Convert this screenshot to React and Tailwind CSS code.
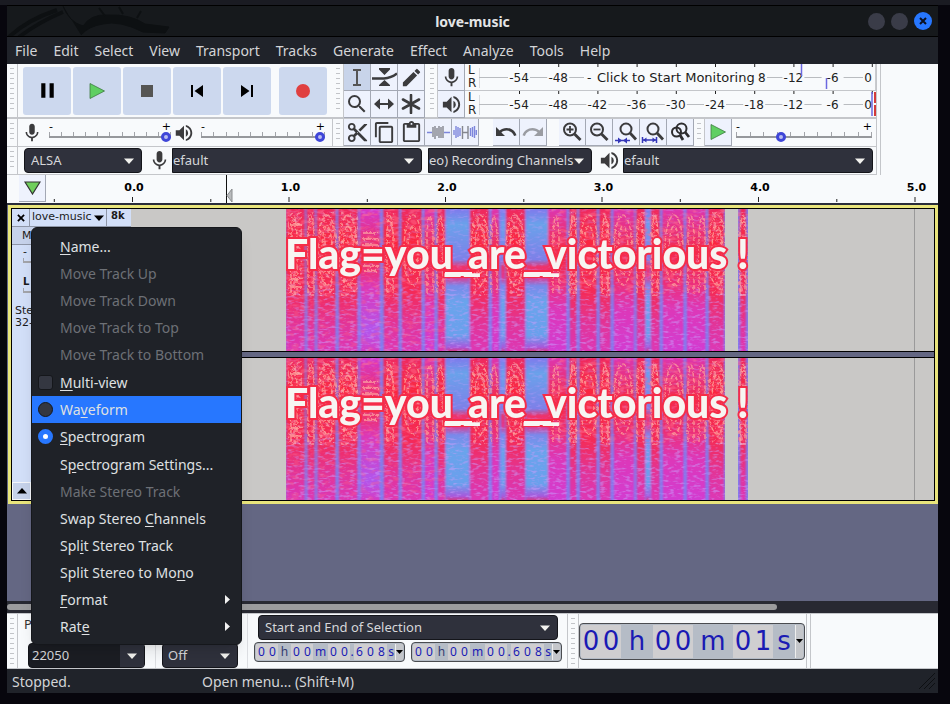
import React from "react";
import {
  MdMic, MdVolumeUp, MdContentCut, MdContentCopy, MdContentPaste, MdEdit, MdSearch,
  MdUndo, MdRedo, MdPause, MdSkipPrevious, MdSkipNext,
} from "react-icons/md";

const MENUS = ["File", "Edit", "Select", "View", "Transport", "Tracks", "Generate", "Effect", "Analyze", "Tools", "Help"];

function Grip() {
  return (
    <div className="flex w-[11px] shrink-0 justify-center border-r border-[#c4c6ca] py-1">
      <div className="w-1 bg-[repeating-linear-gradient(#c2c4c8_0_1px,transparent_1px_5px)]" />
    </div>
  );
}

function ToolButton({ label, active, children }) {
  return (
    <button
      aria-label={label}
      className={`flex h-[27px] w-[27px] shrink-0 items-center justify-center border-r border-b border-[#a3a8b4] text-[#3b3b3d] ${active ? "bg-[#c8d4ea]" : "bg-[#eef2fd]"}`}
    >
      {children}
    </button>
  );
}

function BigButton({ label, children }) {
  return (
    <button aria-label={label} className="flex h-12 w-12 items-center justify-center rounded-[3px] bg-[#ccd8ee] text-black">
      {children}
    </button>
  );
}

function Arrow({ className = "text-[#f2f2ee]" }) {
  return (
    <svg width="10" height="6" viewBox="0 0 10 6" className={className}>
      <path d="M0 0.5H10L5 6Z" fill="currentColor" />
    </svg>
  );
}

function Select({ label, value, className, pad = "pl-[7px]" }) {
  return (
    <div className={`grid h-[25px] shrink-0 items-center border border-[#14151a] bg-[#2f313c] text-[#d6d7da] ${className}`}>
      <select
        aria-label={label}
        className={`col-start-1 row-start-1 h-full w-full appearance-none bg-transparent text-[13px] outline-none ${pad}`}
      >
        <option>{value}</option>
      </select>
      <span className="pointer-events-none col-start-1 row-start-1 mr-[7px] justify-self-end">
        <Arrow />
      </span>
    </div>
  );
}

function Slider({ label, value, className }) {
  return (
    <div className={`shrink-0 font-['DejaVu_Sans',sans-serif] ${className}`}>
      <div className="flex h-2 justify-between text-[11px] leading-[8px] text-black">
        <span>-</span>
        <span>+</span>
      </div>
      <div className="grid">
        <div className="col-start-1 row-start-1 flex h-[5px] justify-between self-start pt-px">
          {Array.from({ length: 11 }, (_, i) => (
            <i key={i} className="w-px bg-[#a2a4a9]" />
          ))}
        </div>
        <input
          type="range"
          aria-label={label}
          defaultValue={value}
          className="col-start-1 row-start-1 h-[11px] w-full appearance-none bg-[linear-gradient(transparent_5px,#96989c_5px,#96989c_7px,transparent_7px)] [&::-webkit-slider-thumb]:h-[10px] [&::-webkit-slider-thumb]:w-[10px] [&::-webkit-slider-thumb]:appearance-none [&::-webkit-slider-thumb]:rounded-full [&::-webkit-slider-thumb]:border-[3px] [&::-webkit-slider-thumb]:border-[#3f46d8] [&::-webkit-slider-thumb]:bg-[#b9bdf0]"
        />
      </div>
    </div>
  );
}

const LEVELS = ["-54", "-48", "-42", "-36", "-30", "-24", "-18", "-12", "-6", "0"];
const HIDDEN_WHILE_IDLE = ["-42", "-36", "-30", "-24", "-18"];

function Meter({ idle }) {
  return (
    <svg width="397" height="26" viewBox="478 0 397 26" className="block shrink-0 font-['DejaVu_Sans',sans-serif]">
      <path d="M478 4V24M478 13.5H862" stroke="#b9bcc0" fill="none" />
      {LEVELS.map((n, i) => {
        const last = n === "0";
        const x = 518 + i * 39.2;
        return (
          <g key={n}>
            <rect x={x} y="0" width="1" height="3" fill="#222" />
            {!(idle && HIDDEN_WHILE_IDLE.includes(n)) && (
              <g>
                <rect x={last ? 863 : x - 11} y="8" width={last ? 10 : 22} height="11" fill="#f8fafc" />
                <text x={last ? 867 : x} y="18" fontSize="12" textAnchor="middle" fill="#222">{n}</text>
              </g>
            )}
          </g>
        );
      })}
      {idle ? (
        <g fontSize="12" fill="#222">
          <rect x="583" y="3" width="183" height="21" fill="#f8fafc" />
          <text x="586" y="18">-</text>
          <text x="757" y="18">8</text>
          <text x="596" y="18" fontSize="13" fill="#1b1b1b">Click to Start Monitoring</text>
          <path d="M800.500 0V12M825.500 14V25" stroke="#6b68e0" strokeWidth="1.500" />
          <path d="M874.500 0V26" stroke="#c9cbce" />
        </g>
      ) : (
        <g>
          <path d="M871 1V25" stroke="#6b68e0" strokeWidth="1.500" />
          <path d="M874 1V12M874 14V25" stroke="#d33a3a" strokeWidth="2" />
        </g>
      )}
    </svg>
  );
}

function MeterRow({ icon, label, idle }) {
  return (
    <div className="flex h-[27px] border-b border-[#c4c6ca]">
      <ToolButton label={label}>{icon}</ToolButton>
      <div className="w-[14px] pl-[3px] font-['DejaVu_Sans',sans-serif] text-[12px] leading-[13px] text-[#222]">
        <div>L</div>
        <div>R</div>
      </div>
      <Meter idle={idle} />
    </div>
  );
}

function PlayIcon({ size = 18 }) {
  return (
    <svg width={size} height={size} viewBox="0 0 18 18">
      <path d="M2 1.500L16.500 9L2 16.500Z" fill="#5fcf62" stroke="#3d7a40" strokeWidth="0.800" />
    </svg>
  );
}

function LensIcon({ plus }) {
  return (
    <svg width="22" height="22" viewBox="0 0 22 22" fill="none" stroke="#3b3b3d">
      <circle cx="9" cy="8.500" r="6" strokeWidth="2" />
      <path d="M13.500 13L19.500 19" strokeWidth="2.800" />
      <path d={plus ? "M5.500 8.500H12.500M9 5V12" : "M5.500 8.500H12.500"} strokeWidth="1.800" />
    </svg>
  );
}

function FitIcon({ wide }) {
  return (
    <svg width="26" height="26" viewBox="0 0 26 26" fill="none">
      <circle cx="13" cy="10" r="5.500" stroke="#3b3b3d" strokeWidth="2" />
      <path d="M17 14L23 20.500" stroke="#3b3b3d" strokeWidth="2.800" />
      <path d={wide ? "M2.500 18V24M16.500 18V24M3 21H17" : "M2 21.500H17"} stroke="#3436b8" strokeWidth="1.500" />
      <path d={wide ? "M3 21L6.500 18.500V23.500ZM16 21L12.500 18.500V23.500Z" : "M9 21.500L5 18.500V24.500ZM10 21.500L14 18.500V24.500Z"} fill="#3436b8" />
    </svg>
  );
}

function WaveIcon({ silence }) {
  return (
    <svg width="24" height="20" viewBox="0 0 24 20" fill="none" strokeWidth="1.400">
      <path
        d={silence ? "M1 8V13M3 4V16M5 5V15M7 6V14M17.500 6V14M19.500 5V15M21.500 4V16M23.300 8V13" : "M1 10.500H6M18 10.500H24"}
        stroke="#7d86dc"
      />
      <path d={silence ? "M9.500 4V17M15 4V17M9 10.500H15" : "M7 5V15M9 4V17M11 6V14M13 4V16M15 5V16M17 4V16"} stroke="#84868e" />
    </svg>
  );
}

function Toolbars() {
  return (
    <div className="flex bg-[#f8fafc]">
      <div className="w-[870px] shrink-0 border-r border-[#c4c6ca]">
        <div className="flex h-[55px] border-b-2 border-[#c4c6ca]">
          <Grip />
          <div className="flex w-[315px] items-center gap-0.5 pl-[5px]">
            <BigButton label="Pause"><MdPause size={25} /></BigButton>
            <BigButton label="Play"><PlayIcon /></BigButton>
            <BigButton label="Stop"><span className="h-3 w-3 bg-[#555553]" /></BigButton>
            <BigButton label="Skip to start"><MdSkipPrevious size={24} /></BigButton>
            <BigButton label="Skip to end"><MdSkipNext size={24} /></BigButton>
            <div className="ml-1.5">
              <BigButton label="Record"><span className="h-[14px] w-[14px] rounded-full bg-[#e04040]" /></BigButton>
            </div>
          </div>
          <Grip />
          <div className="grid h-[54px] shrink-0 grid-cols-3">
            <ToolButton label="Selection tool" active>
              <svg width="14" height="20" viewBox="0 0 14 20" fill="none" stroke="#555" strokeWidth="2"><path d="M3 3H11M3 18H11M7 3V18" /></svg>
            </ToolButton>
            <ToolButton label="Envelope tool">
              <svg width="25" height="22" viewBox="0 0 25 22" fill="#3b3b3d"><path d="M7 2H18V3.500L12.500 9L7 3.500ZM12.500 14L18 19V20H7V19Z" /><path d="M0 12.500H12Q19 12 25 7.500" fill="none" stroke="#3b3b3d" strokeWidth="2.400" /></svg>
            </ToolButton>
            <ToolButton label="Draw tool"><MdEdit size={23} /></ToolButton>
            <ToolButton label="Zoom tool"><MdSearch size={24} /></ToolButton>
            <ToolButton label="Time shift tool">
              <svg width="22" height="14" viewBox="0 0 22 14" fill="#3b3b3d"><path d="M1 7L7 1.500V6H15V1.500L21 7L15 12.500V8H7V12.500Z" /></svg>
            </ToolButton>
            <ToolButton label="Multi tool">
              <svg width="20" height="20" viewBox="0 0 20 20" stroke="#3b3b3d" strokeWidth="2.600" strokeLinecap="round"><path d="M10 1V19M2 5.500L18 14.500M18 5.500L2 14.500" /></svg>
            </ToolButton>
          </div>
          <div className="ml-0.5 flex"><Grip /></div>
          <div className="shrink-0">
            <MeterRow label="Record meter" idle icon={<MdMic size={23} />} />
            <MeterRow label="Playback meter" icon={<MdVolumeUp size={23} />} />
          </div>
        </div>
        <div className="flex h-7 items-center border-b border-[#c4c6ca]">
          <div className="flex h-full w-[326px] shrink-0 items-center border-r border-[#c4c6ca]">
            <div className="flex h-full"><Grip /></div>
            <MdMic size={22} className="ml-[3px] shrink-0 text-[#3b3b3d]" />
            <Slider label="Recording volume" value={100} className="ml-1.5 w-[122px]" />
            <MdVolumeUp size={22} className="ml-0.5 shrink-0 text-[#3b3b3d]" />
            <Slider label="Playback volume" value={100} className="ml-1.5 w-[124px]" />
          </div>
          <div className="flex h-full"><Grip /></div>
          <ToolButton label="Cut"><MdContentCut size={23} /></ToolButton>
          <ToolButton label="Copy"><MdContentCopy size={23} /></ToolButton>
          <ToolButton label="Paste"><MdContentPaste size={23} /></ToolButton>
          <ToolButton label="Trim"><WaveIcon /></ToolButton>
          <ToolButton label="Silence"><WaveIcon silence /></ToolButton>
          <div className="ml-[14px] flex">
            <ToolButton label="Undo"><MdUndo size={24} /></ToolButton>
            <ToolButton label="Redo"><span className="text-[#9a9ca2]"><MdRedo size={24} /></span></ToolButton>
          </div>
          <div className="ml-3 flex">
            <ToolButton label="Zoom in"><LensIcon plus /></ToolButton>
            <ToolButton label="Zoom out"><LensIcon /></ToolButton>
            <ToolButton label="Fit selection"><FitIcon /></ToolButton>
            <ToolButton label="Fit project"><FitIcon wide /></ToolButton>
            <ToolButton label="Zoom toggle">
              <svg width="22" height="22" viewBox="0 0 22 22" fill="none" stroke="#2d2d2f" strokeWidth="2"><circle cx="7.500" cy="11" r="4.500" /><circle cx="12.500" cy="7.500" r="5" /><path d="M11 14L14 19M16 11L20 16" strokeWidth="2.800" /></svg>
            </ToolButton>
          </div>
          <div className="flex h-full"><Grip /></div>
          <ToolButton label="Play at speed"><PlayIcon /></ToolButton>
          <Slider label="Playback speed" value={32} className="ml-1 w-[136px]" />
        </div>
        <div className="flex h-7 items-center border-b border-[#c4c6ca]">
          <div className="flex h-full"><Grip /></div>
          <Select label="Audio host" value="ALSA" className="ml-1.5 w-[118px] rounded" pad="pl-[6px]" />
          <MdMic size={23} className="ml-1.5 shrink-0 text-[#3b3b3d]" />
          <Select label="Recording device" value="efault" className="ml-px w-[250px] rounded-r" pad="pl-0" />
          <Select label="Recording channels" value="eo) Recording Channels" className="ml-1.5 w-[164px] rounded-r" pad="pl-0" />
          <MdVolumeUp size={23} className="ml-1.5 shrink-0 text-[#3b3b3d]" />
          <Select label="Playback device" value="efault" className="ml-0.5 w-[250px] rounded-r" pad="pl-0" />
        </div>
      </div>
      <div className="ml-[3px] flex-1 border-l border-[#c4c6ca]" />
    </div>
  );
}

function Ruler() {
  return (
    <div className="flex h-[28px] overflow-hidden bg-[#f8fafc]">
      <button aria-label="Pinned play head" className="ml-3 flex h-[27px] w-[27px] shrink-0 items-center justify-center border-r border-b border-[#a3a8b4] bg-[#eef2fd]">
        <svg width="17" height="14" viewBox="0 0 17 14"><path d="M1 1H16L8.500 13Z" fill="#6fce5c" stroke="#333" strokeWidth="1.200" /></svg>
      </button>
      <svg width="892" height="28" viewBox="46 0 892 28" className="shrink-0 font-['DejaVu_Sans',sans-serif]">
        {["0.0", "1.0", "2.0", "3.0", "4.0", "5.0"].map((t, i) => (
          <g key={t}>
            <rect x={53.8 + i * 156.5} y="24" width="1" height="3" fill="#222" />
            <rect x={132 + i * 156.5} y="22" width="1" height="5" fill="#222" />
            <text x={134 + i * 156.5} y="16" fontSize="11" fontWeight="bold" textAnchor="middle">{t}</text>
          </g>
        ))}
        <path d="M226.500 0V28" stroke="#111" />
        <path d="M232 14V27L227 20.500Z" fill="#b9bbbd" stroke="#8a8c8e" />
      </svg>
    </div>
  );
}

const BANDS = [
  [286, 305, "r"], [306, 315, "r"], [316, 336, "r"], [338, 358, "r"], [359, 380, "p"], [383, 399, "r"],
  [401, 422, "r"], [424, 435, "m"], [437, 445, "r"], [446, 469, "b"], [470, 489, "r"], [491, 499, "m"],
  [501, 505, "b"], [506, 525, "r"], [526, 548, "b"], [548, 567, "m"], [569, 577, "r"], [579, 597, "r"],
  [599, 611, "r"], [613, 635, "m"], [636, 645, "r"], [646, 650, "b"], [651, 660, "r"], [662, 684, "m"],
  [686, 706, "m"], [708, 724, "r"],
];
const SEAMS = [306, 316, 337, 359, 382, 400, 423, 436, 490, 568, 578, 598, 612, 635, 661, 685, 707];
const FILLS = { r: "url(#bandRed)", m: "url(#bandMagenta)", p: "url(#bandPurple)", b: "url(#bandBlue)" };
const SCRIBBLES = [[288, 14], [308, 6], [319, 15], [341, 17], [386, 8], [473, 14], [509, 14], [571, 6], [602, 8], [641, 4], [652, 6], [712, 11], [740, 6]];
const ROUND = [327, 348, 413, 480, 515, 589, 623, 674, 717];
const TALL = [294, 311, 390, 430, 440, 494, 556, 573, 605, 640, 655, 691, 702, 743];

function SpectrumDefs() {
  return (
    <svg width="0" height="0" className="absolute">
      <defs>
        <linearGradient id="bandRed" x2="0" y2="1">
          <stop offset="0" stopColor="#ee2c62" /><stop offset="0.250" stopColor="#fb2840" /><stop offset="0.580" stopColor="#f42c58" /><stop offset="0.800" stopColor="#e23498" /><stop offset="1" stopColor="#dc38b8" />
        </linearGradient>
        <linearGradient id="bandMagenta" x2="0" y2="1">
          <stop offset="0" stopColor="#dc38b4" /><stop offset="0.300" stopColor="#f42c4c" /><stop offset="0.500" stopColor="#ee2e70" /><stop offset="0.700" stopColor="#dd38b8" /><stop offset="1" stopColor="#d23cd2" />
        </linearGradient>
        <linearGradient id="bandPurple" x2="0" y2="1">
          <stop offset="0" stopColor="#d438d0" /><stop offset="0.350" stopColor="#f62c48" /><stop offset="0.550" stopColor="#dc38b8" /><stop offset="0.850" stopColor="#b255ec" /><stop offset="1" stopColor="#d83ac0" />
        </linearGradient>
        <linearGradient id="bandBlue" x2="0" y2="1">
          <stop offset="0" stopColor="#8374ec" /><stop offset="0.120" stopColor="#6aa2ea" /><stop offset="0.360" stopColor="#7d80e8" /><stop offset="0.410" stopColor="#f03068" /><stop offset="0.480" stopColor="#e83488" /><stop offset="0.540" stopColor="#7b88ea" /><stop offset="0.650" stopColor="#6ba4ec" /><stop offset="0.880" stopColor="#6ba0ec" /><stop offset="0.960" stopColor="#a858dc" /><stop offset="1" stopColor="#e82c60" />
        </linearGradient>
        <filter id="soft" x="-10%" y="-10%" width="120%" height="120%"><feGaussianBlur stdDeviation="0.8 0.3" /></filter>
        <filter id="rough" x="-5%" y="-5%" width="110%" height="110%">
          <feTurbulence type="fractalNoise" baseFrequency="0.5" numOctaves="2" seed="3" />
          <feDisplacementMap in="SourceGraphic" scale="4" />
        </filter>
        <filter id="grainBlue" x="0" y="0" width="100%" height="100%">
          <feTurbulence type="fractalNoise" baseFrequency="0.16 0.4" numOctaves="2" seed="8" />
          <feColorMatrix values="0 0 0 0 0.6  0 0 0 0 0.34  0 0 0 0 0.96  4 0 0 0 -2" />
        </filter>
        <filter id="grainRed" x="0" y="0" width="100%" height="100%">
          <feTurbulence type="fractalNoise" baseFrequency="0.12 0.25" numOctaves="2" seed="21" />
          <feColorMatrix values="0 0 0 0 1  0 0 0 0 0.14  0 0 0 0 0.25  0 5 0 0 -2.500" />
        </filter>
        <filter id="speckle" x="0" y="0" width="100%" height="100%">
          <feTurbulence type="fractalNoise" baseFrequency="0.3 0.34" numOctaves="2" seed="5" />
          <feColorMatrix values="0 0 0 0 1  0 0 0 0 0.72  0 0 0 0 0.65  0 0 7 0 -3.700" />
        </filter>
        <clipPath id="sound"><path d="M286 0H725V142H286ZM738 0H748V142H738Z" /></clipPath>
      </defs>
    </svg>
  );
}

function Channel() {
  return (
    <svg width="803" height="142" viewBox="131 0 803 142" className="block shrink-0 font-['Lato',sans-serif]">
      <rect x="131" width="803" height="142" fill="#c9c8c6" />
      <path d="M914.500 0V142" stroke="#9a9a9a" />
      <g clipPath="url(#sound)">
        <rect x="286" width="462" height="142" fill="#7d7cf0" />
        <g filter="url(#soft)">
          {BANDS.map(([a, b, k]) => <rect key={a} x={a} y="-2" width={b - a} height="146" fill={FILLS[k]} />)}
          <rect x="740" y="-2" width="6" height="146" fill="url(#bandRed)" />
        </g>
        <rect x="286" width="462" height="142" filter="url(#grainBlue)" opacity="0.300" />
        <rect x="286" y="80" width="462" height="62" filter="url(#grainBlue)" opacity="0.300" />
        <rect x="286" width="160" height="85" filter="url(#grainRed)" opacity="0.500" />
        <rect x="552" width="196" height="85" filter="url(#grainRed)" opacity="0.500" />
        <rect x="286" y="85" width="160" height="57" filter="url(#grainRed)" opacity="0.300" />
        <g fill="#7a86f4" filter="url(#soft)">
          {SEAMS.map((x) => (
            <g key={x}>
              <rect x={x - 1} y="-2" width="2" height="146" opacity="0.450" />
              <rect x={x - 1} y="76" width="3" height="68" opacity="0.500" />
            </g>
          ))}
        </g>
        <g opacity="0.420">
          {SCRIBBLES.map(([x, w]) => <rect key={x} x={x} y="3" width={w} height="84" filter="url(#speckle)" />)}
        </g>
        <g stroke="#ffb5a8" strokeWidth="1.500" opacity="0.800" filter="url(#rough)">
          <path d="M363 24H378M362 30H379M362 36H379M363 57H379M364 62H377M290 16H302M290 70H303M290 78H302" />
        </g>
        <g fill="none" stroke="#ffaa9c" strokeWidth="1.500" strokeDasharray="5 2" opacity="0.700" filter="url(#rough)">
          {ROUND.map((x) => (
            <g key={x}>
              <ellipse cx={x} cy="41" rx="9" ry="35" />
              <ellipse cx={x} cy="41" rx="5" ry="24" />
            </g>
          ))}
          {TALL.map((x) => <path key={x} d={`M${x - 3} 84V24Q${x} -10 ${x + 3} 24V84`} />)}
        </g>
      </g>
      <g fontSize="41" fontWeight="900" fill="#f7f5f2">
        <g stroke="#f52c48" strokeWidth="4" paintOrder="stroke">
          <rect x="445" y="63" width="27" height="4" />
          <rect x="524" y="63" width="27" height="4" />
          <text x="285" y="60">Flag=you</text>
          <text x="468" y="60">are</text>
          <text x="545" y="60">victorious</text>
          <text x="737" y="60">!</text>
        </g>
        <text x="443" y="62">__</text>
        <text x="522" y="62">__</text>
      </g>
    </svg>
  );
}

function Track() {
  return (
    <div className="border-t-2 border-[#2a2d3a] bg-[#646783] pl-px">
      <div className="border-[3px] border-[#e9e57c]">
        <div className="flex overflow-hidden border border-black bg-[#c9c8c6]">
          <div className="flex w-[119px] shrink-0 flex-col bg-[#d2dff8] font-['DejaVu_Sans',sans-serif] text-[#1b1b1b]">
            <div className="flex h-[18px] border-b border-[#8f97a8] text-[11px]">
              <button aria-label="Close track" className="flex w-[18px] items-center justify-center border-r border-[#8f97a8]">
                <svg width="8" height="8" viewBox="0 0 9 9" stroke="#000" strokeWidth="2"><path d="M1 1L8 8M8 1L1 8" /></svg>
              </button>
              <button className="flex w-[77px] items-center justify-between border-r border-[#8f97a8] px-0.5">
                love-music
                <Arrow className="text-black" />
              </button>
              <span className="pl-1 text-[10px] leading-[13px] font-bold">8k</span>
            </div>
            <div className="flex h-[18px] border-b border-[#8f97a8] bg-[#c6d2ea] pl-2.5 text-[11px] leading-[18px]">M</div>
            <div className="flex-1 px-[3px] text-[11px] leading-[13px]">
              <div className="pl-2">-</div>
              <div className="ml-2 h-[5px] border-b-2 border-l border-[#a3a5ab]" />
              <div className="mt-3 pl-2 text-[10px] font-bold">L</div>
              <div className="ml-2 h-[5px] border-b-2 border-l border-[#a3a5ab]" />
              <div className="mt-3 leading-[12px]">Stereo, 22050Hz</div>
              <div className="leading-[12px]">32-bit float</div>
            </div>
            <button aria-label="Collapse track" className="flex h-[18px] w-[19px] items-center justify-center border border-[#f4f6fa] bg-[#c6d2ea]">
              <span className="rotate-180"><Arrow className="text-black" /></span>
            </button>
          </div>
          <div className="min-w-0 flex-1 overflow-hidden">
            <Channel />
            <div className="h-[7px] border-y border-black bg-[#646783]" />
            <Channel />
          </div>
        </div>
      </div>
    </div>
  );
}

const TIME_SMALL = [
  ["00", "w-[22px] bg-[#cfced0]"], ["h", "w-[13px] bg-[#b5bcc6] text-[#333a70]"], ["00", "w-[22px] bg-[#cfced0]"],
  ["m", "w-[15px] bg-[#b5bcc6]"], ["00", "w-[22px] bg-[#cfced0]"], [".", "w-[4px] bg-[#b5bcc6]"],
  ["608", "w-[33px] bg-[#cfced0]"], ["s", "w-[8px] bg-[#b5bcc6]"],
];
const TIME_LARGE = [
  ["00", "w-10 bg-[#cfced0]"], ["h", "w-8 bg-[#b5bcc6]"], ["00", "w-10 bg-[#cfced0]"],
  ["m", "w-10 bg-[#b5bcc6]"], ["01", "w-10 bg-[#cfced0]"], ["s", "w-[22px] bg-[#b5bcc6]"],
];

function TimeField({ label, parts, className }) {
  return (
    <div role="group" aria-label={label} className={`flex shrink-0 overflow-hidden rounded border border-[#4a4c50] bg-[#b5bcc6] p-px text-[#1a1ab4] ${className}`}>
      {parts.map(([text, cls], i) => (
        <span key={i} className={`flex shrink-0 items-center justify-around ${cls}`}>
          {text.split("").map((c, j) => <span key={j}>{c}</span>)}
        </span>
      ))}
      <button aria-label={`${label} format`} className="flex flex-1 items-center justify-center border-l border-[#eee] bg-[#c4c6ca]">
        <svg width="7" height="4" viewBox="0 0 7 4"><path d="M0 0H7L3.500 4Z" /></svg>
      </button>
    </div>
  );
}

function SelectionBar() {
  return (
    <div className="flex h-[56px] border-t border-b border-[#c4c6ca] bg-[#f8fafc]">
      <Grip />
      <div className="flex w-[127px] flex-col justify-between pl-1.5">
        <div className="pt-[3px] text-[13px] leading-[14px] text-[#333]">Project Rate (Hz)</div>
        <div className="ml-1 flex h-[25px] w-[117px] rounded border border-[#14151a] bg-[#1b1d23] text-[#d6d7da]">
          <input aria-label="Project rate" defaultValue="22050" className="w-0 flex-1 bg-transparent pl-[3px] text-[13px] outline-none" />
          <button aria-label="Rates" className="flex w-6 items-center justify-center bg-[#2f313c]"><Arrow /></button>
        </div>
      </div>
      <div className="ml-2.5 flex items-end border-l border-[#dcdee2] pl-1.5">
        <Select label="Snap to" value="Off" className="w-[76px] rounded" pad="pl-[5px]" />
      </div>
      <div className="ml-[9px] w-[308px] border-l border-[#dcdee2] pt-px pl-[6px]">
        <Select label="Selection mode" value="Start and End of Selection" className="ml-1 w-[300px] rounded" pad="pl-[6px]" />
        <div className="mt-0.5 flex gap-1.5 text-[12px]">
          <TimeField label="Selection start" parts={TIME_SMALL} className="h-5 w-[151px]" />
          <TimeField label="Selection end" parts={TIME_SMALL} className="h-5 w-[151px]" />
        </div>
      </div>
      <div className="ml-3 flex border-l border-[#c4c6ca]"><Grip /></div>
      <div className="flex items-center border-r border-[#c4c6ca] pr-px">
        <TimeField label="Audio position" parts={TIME_LARGE} className="h-[37px] w-[226px] font-['DejaVu_Sans',sans-serif] text-[26px]" />
      </div>
      <div className="ml-[3px] border-l border-[#c4c6ca]" />
    </div>
  );
}

function Item({ a = "", u = "", b = "", off, hot, kind, checked, sub }) {
  const text = (
    <span>{a}<span className="underline underline-offset-2">{u}</span>{b}</span>
  );
  const cls = `flex h-[27px] w-full items-center text-left ${hot ? "bg-[#2777ff]" : ""} ${off ? "text-[#6d7076]" : "text-[#dfe0e2]"}`;
  if (kind) {
    return (
      <label className={cls}>
        <input
          type={kind}
          name={kind === "radio" ? "view" : "multi"}
          defaultChecked={checked}
          className={`ml-[6px] mr-[7px] h-[15px] w-[15px] appearance-none border ${kind === "radio" ? "rounded-full" : "rounded-[3px]"} ${checked ? "border-[5px] border-[#2777ff] bg-white" : "border-[#15171b] bg-[#343741]"}`}
        />
        {text}
      </label>
    );
  }
  return (
    <button className={`${cls} justify-between pr-[11px] pl-[28px]`} disabled={off}>
      {text}
      {sub && <svg width="5" height="9" viewBox="0 0 5 9"><path d="M0 0L5 4.500L0 9Z" fill="#f2f2f2" /></svg>}
    </button>
  );
}

function TrackMenu() {
  return (
    <div className="absolute top-[222px] left-[31px] flex w-[211px] flex-col gap-px rounded-md border border-[#15171b] bg-[#1f2228] pt-[5px] pb-1 text-[14px] shadow-lg">
      <div>
        <Item u="N" b="ame..." />
        <Item a="Move Track Up" off />
        <Item a="Move Track Down" off />
        <Item a="Move Track to Top" off />
        <Item a="Move Track to Bottom" off />
      </div>
      <div>
        <Item u="M" b="ulti-view" kind="checkbox" />
        <Item a="Wa" u="v" b="eform" kind="radio" hot />
        <Item u="S" b="pectrogram" kind="radio" checked />
      </div>
      <div>
        <Item a="S" u="p" b="ectrogram Settings..." />
        <Item a="Make Stereo Track" off />
        <Item a="Swap Stereo " u="C" b="hannels" />
        <Item a="Spl" u="i" b="t Stereo Track" />
        <Item a="Split Stereo to Mo" u="n" b="o" />
        <Item u="F" b="ormat" sub />
        <Item a="Rat" u="e" sub />
      </div>
    </div>
  );
}

function TitleBar() {
  return (
    <header className="grid h-[31px] items-center border-t border-black bg-[#16191c]">
      <svg width="170" height="30" viewBox="0 0 170 30" className="col-start-1 row-start-1" fill="none" stroke="#0d1012">
        <path d="M2 31Q20 14 50 4M12 31Q32 16 56 6" strokeWidth="4" />
        <path d="M56 0Q62 16 76 20Q84 8 100 9Q124 8 138 18L162 21L158 27L136 26Q112 14 96 18Q82 20 74 29" strokeWidth="1" fill="#0d1012" />
        <path d="M98 10L92 2M116 8L112 1M130 12L134 5" strokeWidth="2" />
      </svg>
      <h1 className="col-start-1 row-start-1 text-center text-[14px] font-bold text-[#e4e5e6]">love-music</h1>
      <div className="col-start-1 row-start-1 mr-1.5 flex items-center gap-1.5 justify-self-end">
        <button aria-label="Minimise" className="h-[17px] w-[17px] rounded-full bg-[#3a3c48]" />
        <button aria-label="Maximise" className="h-[17px] w-[17px] rounded-full bg-[#3a3c48]" />
        <button aria-label="Close" className="flex h-[18px] w-[18px] items-center justify-center rounded-full bg-[#2777ff]">
          <svg width="8" height="8" viewBox="0 0 8 8" stroke="#0b1020" strokeWidth="2"><path d="M1 1L7 7M7 1L1 7" /></svg>
        </button>
      </div>
    </header>
  );
}

export default function App() {
  return (
    <div className="relative flex min-h-screen flex-col overflow-hidden border-t-[5px] border-[#1a1b22] bg-[#07060d] pr-3 pb-[11px] pl-[7px] font-['Noto_Sans',sans-serif]">
      <TitleBar />
      <nav className="flex h-7 items-center border-t border-black bg-[#20232a] pb-px text-[14px] text-[#d3d4d7]">
        {MENUS.map((m) => <button key={m} className="px-2">{m}</button>)}
      </nav>
      <Toolbars />
      <Ruler />
      <SpectrumDefs />
      <main className="flex-1 bg-[#646783]"><Track /></main>
      <div className="flex h-3 items-center bg-[#282932]">
        <div className="h-1.5 w-[770px] rounded-full bg-[#9b9b9d]" />
      </div>
      <SelectionBar />
      <footer className="flex h-6 items-center bg-[#20232a] pl-[5px] text-[14px] text-[#d3d4d7]">
        <span className="w-[190px]">Stopped.</span>
        <span className="flex-1">Open menu... (Shift+M)</span>
        <svg width="18" height="18" viewBox="0 0 18 18" stroke="#0d0f12" className="mr-0.5"><path d="M1 17L17 1M6 17L17 6M11 17L17 11" /></svg>
      </footer>
      <TrackMenu />
    </div>
  );
}
